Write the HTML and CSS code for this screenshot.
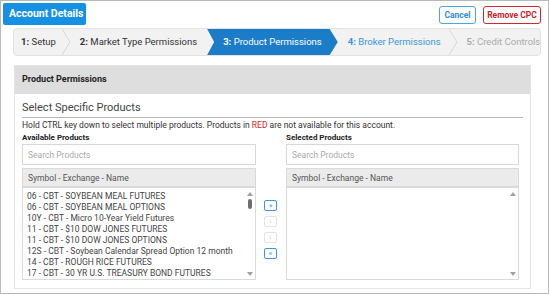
FILE: index.html
```html
<!DOCTYPE html>
<html lang="en">
<head>
  <meta charset="UTF-8" />
  <title>Account Details - Product Permissions</title>
  <link rel="stylesheet" href="styles.css">
</head>
<body>
  <div class="page">
    <div class="topbar">
      <div class="title">Account Details</div>
      <div class="actions">
        <button class="btn btn-cancel">Cancel</button>
        <button class="btn btn-remove">Remove CPC</button>
      </div>
    </div>

    <ol class="steps">
      <li class="step"><b>1:</b> Setup</li>
      <li class="step"><b>2:</b> Market Type Permissions</li>
      <li class="step active"><b>3:</b> Product Permissions</li>
      <li class="step next"><b>4:</b> Broker Permissions</li>
      <li class="step locked"><b>5:</b> Credit Controls</li>
    </ol>

    <section class="panel">
      <div class="panel-head">Product Permissions</div>
      <div class="panel-body">
        <h3 class="section-title">Select Specific Products</h3>
        <p class="hint">Hold CTRL key down to select multiple products. Products in <span class="red">RED</span> are not available for this account.</p>

        <div class="pickers">
          <div class="picker">
            <div class="picker-label">Available Products</div>
            <input class="search" type="text" placeholder="Search Products">
            <div class="list-head">Symbol - Exchange - Name</div>
            <div class="list">
              <ul class="items">
                <li>06 - CBT - SOYBEAN MEAL FUTURES</li>
                <li>06 - CBT - SOYBEAN MEAL OPTIONS</li>
                <li>10Y - CBT - Micro 10-Year Yield Futures</li>
                <li>11 - CBT - $10 DOW JONES FUTURES</li>
                <li>11 - CBT - $10 DOW JONES OPTIONS</li>
                <li>12S - CBT - Soybean Calendar Spread Option 12 month</li>
                <li>14 - CBT - ROUGH RICE FUTURES</li>
                <li>17 - CBT - 30 YR U.S. TREASURY BOND FUTURES</li>
              </ul>
              <div class="scrollbar">
                <span class="arrow up"></span>
                <span class="thumb"></span>
                <span class="arrow down"></span>
              </div>
            </div>
          </div>

          <div class="movers">
            <button class="move on">&raquo;</button>
            <button class="move">&rsaquo;</button>
            <button class="move">&lsaquo;</button>
            <button class="move on">&laquo;</button>
          </div>

          <div class="picker">
            <div class="picker-label">Selected Products</div>
            <input class="search" type="text" placeholder="Search Products">
            <div class="list-head">Symbol - Exchange - Name</div>
            <div class="list">
              <ul class="items"></ul>
              <div class="scrollbar">
                <span class="arrow up"></span>
                <span class="arrow down"></span>
              </div>
            </div>
          </div>
        </div>
      </div>
    </section>
  </div>
</body>
</html>
```

FILE: styles.css
```css
* {
  box-sizing: border-box;
}
body {
  margin: 0;
  font-family: 'Roboto', 'Liberation Sans', sans-serif;
  color: #333;
  background: #fff;
}
.page {
  width: 549px;
  height: 294px;
  border: 1px solid #b9b9b9;
  padding: 2px 7px 0 2px;
  overflow: hidden;
}

/* top bar */
.topbar {
  display: flex;
  justify-content: space-between;
  align-items: flex-start;
}
.title {
  width: 83px;
  height: 22px;
  line-height: 22px;
  padding-left: 6px;
  background: #1590e2;
  color: #fff;
  font-size: 10.5px;
  font-weight: 700;
  white-space: nowrap;
  border-radius: 2px;
}
.actions {
  display: flex;
  gap: 7px;
  margin-top: 3px;
}
.btn {
  height: 18px;
  padding: 0;
  background: #fff;
  font-family: inherit;
  font-size: 8.5px;
  font-weight: 700;
  border-radius: 3px;
  cursor: pointer;
}
.btn-cancel {
  width: 37px;
  border: 1.5px solid #4aa6dc;
  color: #2f8fcc;
}
.btn-remove {
  width: 58px;
  border: 1.5px solid #cc2a30;
  color: #c8252b;
}

/* wizard steps */
.steps {
  list-style: none;
  margin: 3px 0 0 10px;
  padding: 0;
  height: 28px;
  display: flex;
  background: #f2f2f2;
  border: 1px solid #e2e2e2;
  border-radius: 4px;
  font-size: 9.5px;
  color: #333;
  overflow: hidden;
}
.step {
  position: relative;
  line-height: 26px;
  padding: 0 16px 0 10px;
  white-space: nowrap;
}
.step::after {
  content: '';
  position: absolute;
  right: 0;
  top: 0;
  width: 8px;
  height: 100%;
  background:
    linear-gradient(to top right, transparent calc(50% - 0.8px), #d6d6d6 50%, transparent calc(50% + 0.8px)) top / 100% 50% no-repeat,
    linear-gradient(to bottom right, transparent calc(50% - 0.8px), #d6d6d6 50%, transparent calc(50% + 0.8px)) bottom / 100% 50% no-repeat;
}
.step:first-child {
  padding: 0 14px 0 7px;
}
.step:nth-child(2) {
  padding-right: 17px;
}
.step.active {
  margin-left: -7px;
  padding: 0 16px 0 16px;
  background: #1b7dc7;
  color: #fff;
  clip-path: polygon(0 0, calc(100% - 8px) 0, 100% 50%, calc(100% - 8px) 100%, 0 100%, 7px 50%);
}
.step.active::after,
.step:nth-child(2)::after,
.step.locked::after {
  display: none;
}
.step.next {
  color: #3597d6;
}
.step.locked {
  color: #aaa;
}

/* panel */
.panel {
  margin: 9px 10px 0 11px;
  border: 1px solid #e4e4e4;
  height: 224px;
}
.panel-head {
  height: 28px;
  line-height: 27px;
  padding-left: 7px;
  background: #dedede;
  font-size: 9px;
  font-weight: 700;
  color: #222;
}
.panel-body {
  padding: 0 7px;
}
.section-title {
  margin: 0;
  padding: 7px 0 3px;
  font-size: 11px;
  font-weight: 400;
  color: #444;
  border-bottom: 1px solid #b8b8b8;
}
.hint {
  margin: 1px 0 0;
  font-size: 8.5px;
  line-height: 12px;
  color: #333;
}
.red {
  color: #e02020;
}

.pickers {
  display: grid;
  grid-template-columns: 234px 30px 233px;
}
.picker-label {
  font-size: 8px;
  font-weight: 700;
  color: #222;
  height: 13px;
  line-height: 13px;
}
.search {
  display: block;
  width: 100%;
  height: 21px;
  margin: 0;
  padding: 0 5px;
  border: 1px solid #d8d8d8;
  font-family: inherit;
  font-size: 8.5px;
  color: #333;
}
.search::placeholder {
  color: #aaa;
}
.list-head {
  margin-top: 3px;
  height: 20px;
  line-height: 19px;
  padding-left: 5px;
  background: #ebebeb;
  border: 1px solid #dadada;
  border-bottom: 2px solid #dadada;
  font-size: 8.5px;
  color: #555;
}
.list {
  display: flex;
  height: 92px;
  border: 1px solid #dadada;
  border-top: none;
}
.items {
  flex: 1;
  list-style: none;
  margin: 0;
  padding: 3px 4px;
  font-size: 8.5px;
  color: #444;
  line-height: 11px;
  overflow: hidden;
}
.items li {
  white-space: nowrap;
}
.scrollbar {
  width: 11px;
  display: flex;
  flex-direction: column;
  align-items: center;
  padding: 4px 0 3px;
}
.scrollbar .arrow {
  width: 0;
  height: 0;
  border-left: 3px solid transparent;
  border-right: 3px solid transparent;
}
.scrollbar .up {
  border-bottom: 4px solid #a0a0a0;
}
.scrollbar .down {
  margin-top: auto;
  border-top: 4px solid #a0a0a0;
}
.scrollbar .thumb {
  width: 4px;
  height: 10px;
  margin-top: 3px;
  background: #6e6e6e;
  border-radius: 2px;
}

.movers {
  display: flex;
  flex-direction: column;
  align-items: center;
  padding-top: 69px;
}
.move {
  flex: none;
  width: 13px;
  height: 11px;
  margin: 0 0 5px -1px;
  padding: 0;
  line-height: 8px;
  font-size: 8px;
  font-family: inherit;
  background: #fff;
  border: 1px solid #e2e2e2;
  border-radius: 2px;
  color: #ccc;
}
.move.on {
  border: 1.5px solid #3a9ad9;
  color: #3a9ad9;
}
```
